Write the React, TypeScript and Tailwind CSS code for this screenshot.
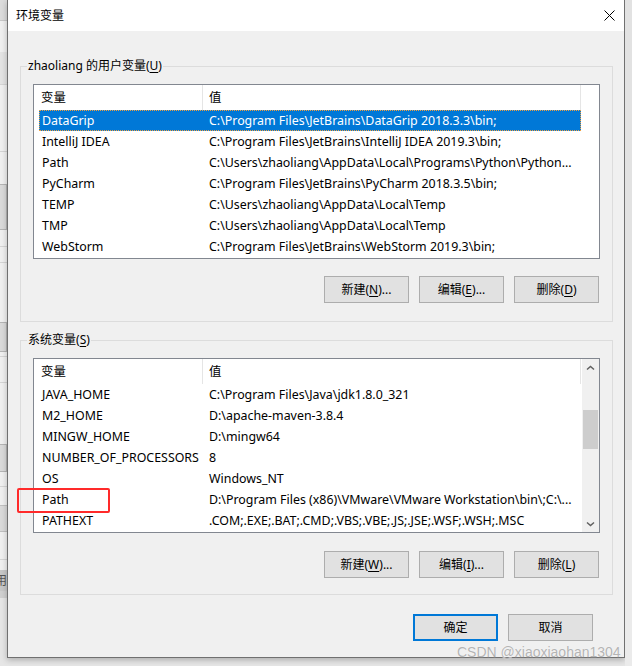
import React from 'react';

// font stack: Latin first, CJK after
const ui = "font-['Noto_Sans','Noto_Sans_CJK_SC',sans-serif]";

interface EnvVar {
  name: string;
  value: string;
}

const userVars: EnvVar[] = [
  { name: 'DataGrip', value: 'C:\\Program Files\\JetBrains\\DataGrip 2018.3.3\\bin;' },
  { name: 'IntelliJ IDEA', value: 'C:\\Program Files\\JetBrains\\IntelliJ IDEA 2019.3\\bin;' },
  { name: 'Path', value: 'C:\\Users\\zhaoliang\\AppData\\Local\\Programs\\Python\\Python...' },
  { name: 'PyCharm', value: 'C:\\Program Files\\JetBrains\\PyCharm 2018.3.5\\bin;' },
  { name: 'TEMP', value: 'C:\\Users\\zhaoliang\\AppData\\Local\\Temp' },
  { name: 'TMP', value: 'C:\\Users\\zhaoliang\\AppData\\Local\\Temp' },
  { name: 'WebStorm', value: 'C:\\Program Files\\JetBrains\\WebStorm 2019.3\\bin;' },
];

const systemVars: EnvVar[] = [
  { name: 'JAVA_HOME', value: 'C:\\Program Files\\Java\\jdk1.8.0_321' },
  { name: 'M2_HOME', value: 'D:\\apache-maven-3.8.4' },
  { name: 'MINGW_HOME', value: 'D:\\mingw64' },
  { name: 'NUMBER_OF_PROCESSORS', value: '8' },
  { name: 'OS', value: 'Windows_NT' },
  { name: 'Path', value: 'D:\\Program Files (x86)\\VMware\\VMware Workstation\\bin\\;C:\\...' },
  { name: 'PATHEXT', value: '.COM;.EXE;.BAT;.CMD;.VBS;.VBE;.JS;.JSE;.WSF;.WSH;.MSC' },
];

const Mn = ({ pre, k, post = '' }: { pre: string; k: string; post?: string }) => (
  <span>
    {pre}(<span className="underline underline-offset-2">{k}</span>){post}
  </span>
);

const Btn = ({ children, primary }: { children: React.ReactNode; primary?: boolean }) => (
  <div
    className={
      primary
        ? 'w-[85px] h-[27px] flex items-center justify-center bg-[#e1e1e1] border-2 border-[#0078d7] text-[12px]'
        : 'w-[85px] h-[27px] flex items-center justify-center bg-[#e1e1e1] border border-[#adadad] text-[12px]'
    }
  >
    {children}
  </div>
);

const Header = () => (
  <div className="h-[25px] pt-[2px] flex shrink-0">
    <div className="w-[168px] pl-[7px] flex items-center">变量</div>
    <div className="w-px -mt-[2px] bg-[#e5e5e5]" />
    <div className="w-[377px] pl-[6px] flex items-center">值</div>
    <div className="w-px -mt-[2px] bg-[#e5e5e5]" />
  </div>
);

const Row = ({ item, selected }: { item: EnvVar; selected?: boolean }) => (
  <div
    className={
      selected
        ? 'ml-[5px] w-[542px] h-[21px] pt-[2px] flex items-center shrink-0 bg-[#0078d7] text-white outline-1 outline-dotted outline-[#f0a040] -outline-offset-1'
        : 'ml-[5px] w-[542px] h-[21px] pt-[2px] flex items-center shrink-0 text-black'
    }
  >
    <div className="w-[164px] pl-[3px] whitespace-nowrap overflow-hidden">{item.name}</div>
    <div className="flex-1 pl-[6px] whitespace-nowrap overflow-hidden">{item.value}</div>
  </div>
);

const Chevron = ({ down }: { down?: boolean }) => (
  <svg width="9" height="6" viewBox="0 0 9 6">
    <path
      d={down ? 'M1 1.5 L4.5 4.5 L8 1.5' : 'M1 4.5 L4.5 1.5 L8 4.5'}
      fill="none"
      stroke="#606060"
      strokeWidth="1.5"
    />
  </svg>
);

const ScrollBar = () => (
  <div className="w-[17px] flex flex-col bg-[#f0f0f0]">
    <div className="h-[17px] flex items-center justify-center">
      <Chevron />
    </div>
    <div className="flex-1 flex flex-col items-center">
      <div className="mt-[34px] w-[15px] h-[39px] bg-[#cdcdcd]" />
    </div>
    <div className="h-[17px] flex items-center justify-center">
      <Chevron down />
    </div>
  </div>
);

const Group = ({
  label,
  items,
  scroll,
  buttons,
  className,
}: {
  label: React.ReactNode;
  items: EnvVar[];
  scroll?: boolean;
  buttons: React.ReactNode[];
  className: string;
}) => (
  <fieldset className={`border border-[#dcdcdc] pl-[12px] pr-[12px] ${className}`}>
    <legend className="-ml-[6px] px-[1px] text-[12px] leading-[16px]">{label}</legend>
    <div className="mt-[10px] h-[175px] border border-[#828790] bg-white flex text-[12.4px]">
      <div className="flex-1 flex flex-col">
        <Header />
        {items.map((item, i) => (
          <Row key={item.name + i} item={item} selected={!scroll && i === 0} />
        ))}
      </div>
      {scroll && <ScrollBar />}
    </div>
    <div className="flex justify-end gap-[10px] pr-[1px]">{buttons}</div>
  </fieldset>
);

// fragment of the window that sits behind the dialog
const LeftStrip = () => (
  <div className="w-[7px] h-full flex flex-col bg-[#f0f0f0]">
    <div className="h-[21px] bg-[#dcdcdc] border-b border-[#c8c8c8]" />
    <div className="h-[31px]" />
    <div className="h-[33px] bg-[#e4e4e4] border-b border-[#d5d5d5]" />
    <div className="h-[67px] border-b border-[#d5d5d5]" />
    <div className="h-[32px]" />
    <div className="h-[46px] bg-[#dadada] border border-l-0 border-[#b5b5b5]" />
    <div className="h-[17px] border-b border-[#d5d5d5]" />
    <div className="h-[16px] border-b border-[#d5d5d5]" />
    <div className="h-[59px]" />
    <div className="h-[30px] bg-[#dadada] border border-l-0 border-[#b5b5b5]" />
    <div className="h-[5px] border-b border-[#d5d5d5]" />
    <div className="h-[26px] border-b border-[#d5d5d5]" />
    <div className="h-[61px]" />
    <div className="h-[28px] bg-[#dadada] border border-l-0 border-[#b5b5b5]" />
    <div className="h-[15px] border-b border-[#d5d5d5]" />
    <div className="h-[18px]" />
    <div className="h-[27px] bg-[#dadada] border-y border-[#c0c0c0]" />
    <div className="h-[28px] border-b border-[#d5d5d5]" />
    <div className="h-[10px]" />
    <div className="h-[21px] bg-[#c8c8c8] text-[12px] leading-[21px] text-[#555] overflow-hidden whitespace-nowrap -indent-[5px]">
      用(
    </div>
    <div className="h-[7px] bg-[#d0d0d0]" />
    <div className="flex-1 bg-[#e6e6e6]" />
  </div>
);

const RightStrip = () => (
  <div className="flex-1 h-full flex flex-col">
    <div className="h-[460px] bg-[#e2e2e2]" />
    <div className="flex-1 bg-[#ebebeb]" />
  </div>
);

export default function App() {
  return (
    <div className={`w-[632px] h-[666px] relative flex overflow-hidden bg-[#e6e6e6] text-black ${ui}`}>
      <LeftStrip />

      <div className="w-[618px] h-[658px] flex flex-col border-x border-b border-[#707070] bg-[#f0f0f0] shadow-[0_2px_6px_rgba(0,0,0,0.25)]">
        <div className="h-[31px] shrink-0 bg-white flex items-center justify-between pl-[8px] pr-[9px] text-[12px]">
          <span>环境变量</span>
          <svg width="11" height="11" viewBox="0 0 11 11">
            <path d="M0.5 0.5 L10.5 10.5 M10.5 0.5 L0.5 10.5" stroke="#000" strokeWidth="1" />
          </svg>
        </div>

        <div className="flex-1 flex flex-col pl-[12px] pr-[11px]">
          <Group
            className="mt-[27px] pb-[18px]"
            label={<Mn pre="zhaoliang 的用户变量" k="U" />}
            items={userVars}
            buttons={[
              <div key="n" className="mt-[17px]"><Btn><Mn pre="新建" k="N" post="..." /></Btn></div>,
              <div key="e" className="mt-[17px]"><Btn><Mn pre="编辑" k="E" post="..." /></Btn></div>,
              <div key="d" className="mt-[17px]"><Btn><Mn pre="删除" k="D" /></Btn></div>,
            ]}
          />

          <Group
            className="mt-[10px] pb-[16px]"
            label={<Mn pre="系统变量" k="S" />}
            items={systemVars}
            scroll
            buttons={[
              <div key="n" className="mt-[18px]"><Btn><Mn pre="新建" k="W" post="..." /></Btn></div>,
              <div key="e" className="mt-[18px]"><Btn><Mn pre="编辑" k="I" post="..." /></Btn></div>,
              <div key="d" className="mt-[18px]"><Btn><Mn pre="删除" k="L" /></Btn></div>,
            ]}
          />

          <div className="mt-[19px] flex justify-end gap-[10px] pr-[20px]">
            <Btn primary>确定</Btn>
            <Btn>取消</Btn>
          </div>
        </div>
      </div>

      <RightStrip />

      {/* red annotation box */}
      <div className="absolute left-[17px] top-[488px] w-[93px] h-[25px] border-2 border-[#ff2a2a] rounded-[2px]" />

      {/* csdn watermark */}
      <div className="absolute left-[457px] top-[643px] text-[14px] leading-[18px] text-[#b4b4b4] whitespace-nowrap font-['Liberation_Sans',sans-serif] [text-shadow:0_0_1px_#fff]">
        CSDN @xiaoxiaohan1304
      </div>
    </div>
  );
}
